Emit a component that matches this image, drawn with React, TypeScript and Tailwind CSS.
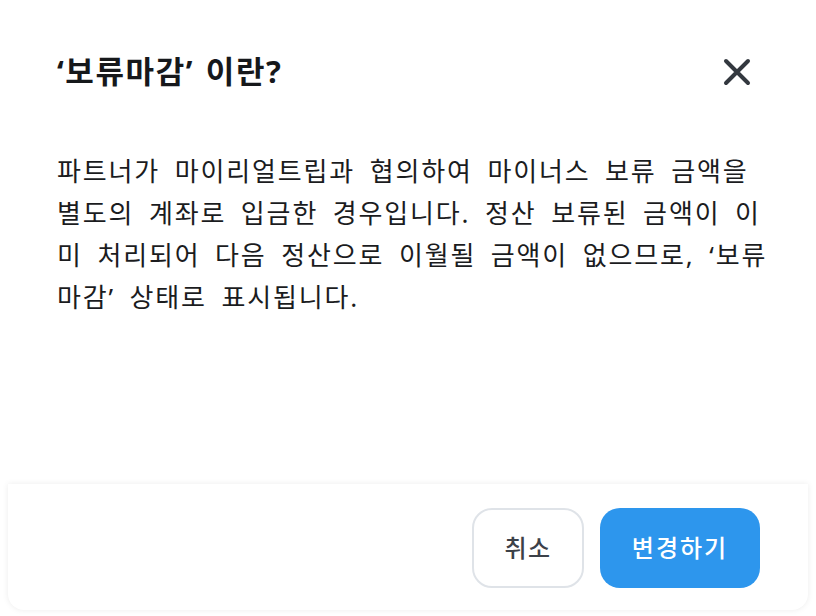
import React from "react";

export default function App() {
  const font = { fontFamily: '"Noto Sans", "Noto Sans CJK KR", sans-serif' };
  return (
    <div className="w-[816px] h-[616px] bg-white overflow-hidden flex flex-col" style={font}>
      <div className="flex items-center justify-between pl-[57px] pr-[64px] pt-[47px] h-[94px]">
        <h1 className="text-[31px] font-bold text-[#16181b] tracking-[1.6px] [word-spacing:2px] leading-[44px]">‘보류마감’ 이란?</h1>
        <svg width="30" height="30" viewBox="0 0 30 30" className="mt-[3px]">
          <path d="M4 4 L26 26 M26 4 L4 26" stroke="#33383f" strokeWidth="4" strokeLinecap="round" />
        </svg>
      </div>
      <p className="pl-[57px] pr-[16px] pt-[56px] text-[26px] leading-[42px] text-[#1b1c1e] tracking-[1.85px] [word-spacing:6px] whitespace-nowrap">
        파트너가 마이리얼트립과 협의하여 마이너스 보류 금액을
        <br />
        별도의 계좌로 입금한 경우입니다. 정산 보류된 금액이 이
        <br />
        미 처리되어 다음 정산으로 이월될 금액이 없으므로, ‘보류
        <br />
        마감’ 상태로 표시됩니다.
      </p>
      <div className="flex-1" />
      <div className="mx-[8px] mb-[6px] h-[126px] rounded-b-2xl bg-white shadow-[0_0_6px_rgba(0,0,0,0.08)] flex items-start justify-end gap-[16px] pt-[24px] pr-[48px]">
        <button className="w-[112px] h-[80px] rounded-[20px] border-2 border-[#dfe3e8] bg-white text-[24px] font-medium text-[#3c4148] tracking-[1.5px]">취소</button>
        <button className="w-[160px] h-[80px] rounded-[20px] bg-[#2d96ed] text-[24px] font-medium text-white tracking-[2px]">변경하기</button>
      </div>
    </div>
  );
}
